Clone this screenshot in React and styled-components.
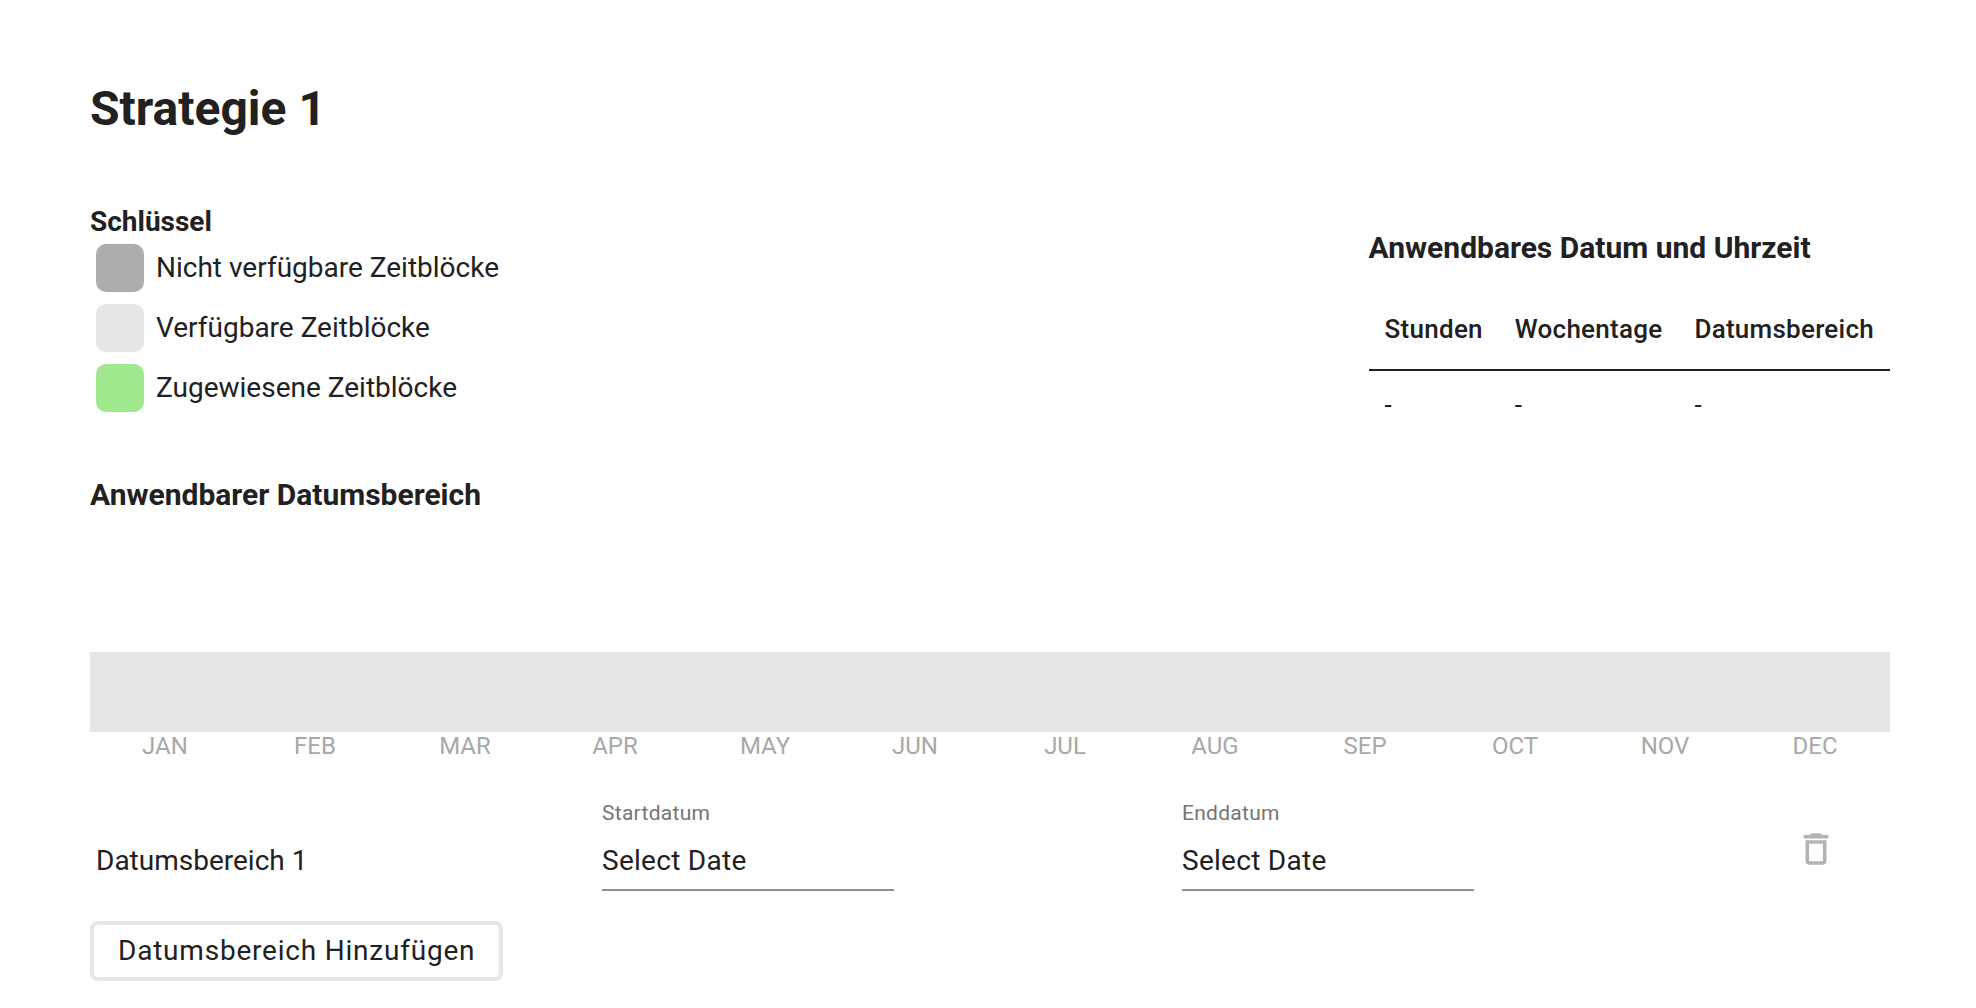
import React from "react";
import styled, { createGlobalStyle } from "styled-components";

const GlobalStyle = createGlobalStyle`
  *, *::before, *::after { box-sizing: border-box; }
  body {
    margin: 0;
    background: #fff;
    color: #212121;
    font-family: Roboto, "Liberation Sans", sans-serif;
    font-size: 28px;
    line-height: 32px;
  }
`;

const Page = styled.main`
  padding: 81px 86px 26px 90px;
`;

const Title = styled.h1`
  margin: 0;
  font-size: 48px;
  line-height: 56px;
  font-weight: 700;
`;

const Summary = styled.div`
  display: flex;
  justify-content: space-between;
  align-items: flex-start;
  margin-top: 69px;
`;

const LegendTitle = styled.h2`
  margin: 0;
  font-size: 28px;
  line-height: 32px;
  font-weight: 700;
`;

const LegendList = styled.ul`
  list-style: none;
  margin: 0;
  padding: 0;
`;

const LegendItem = styled.li`
  display: flex;
  align-items: center;
  gap: 12px;
  padding: 6px;
`;

const Swatch = styled.span`
  width: 48px;
  height: 48px;
  border-radius: 10px;
  background: ${({ $color }) => $color};
`;

const Applicable = styled.section`
  padding-top: 24px;
`;

const SectionTitle = styled.h2`
  margin: 0;
  font-size: 30px;
  line-height: 36px;
  font-weight: 700;
`;

const Table = styled.table`
  margin-top: 23px;
  border-collapse: collapse;
  font-size: 26px;
  line-height: 32px;
  text-align: left;
`;

const HeadCell = styled.th`
  padding: 24px 16px;
  font-weight: 500;
  letter-spacing: 0.01em;
  border-bottom: 2px solid #212121;
`;

const Cell = styled.td`
  padding: 18px 16px 0;
`;

const RangeSection = styled.section`
  margin-top: 56px;
`;

const YearBar = styled.div`
  height: 80px;
  margin-top: 139px;
  background: #e5e5e5;
`;

const Months = styled.ol`
  display: grid;
  grid-template-columns: repeat(12, 1fr);
  list-style: none;
  margin: 0;
  padding: 0;
  font-size: 24px;
  line-height: 28px;
  text-align: center;
  color: #a8a8a8;
`;

const RangeRow = styled.div`
  display: grid;
  grid-template-columns: 512fr 580fr 560fr 148fr;
  margin-top: 39px;
`;

const RangeName = styled.div`
  padding: 46px 6px 0;
`;

const Field = styled.div`
  display: flex;
  flex-direction: column;
  align-items: flex-start;
  letter-spacing: 0.01em;
`;

const FieldLabel = styled.label`
  font-size: 21px;
  line-height: 28px;
  color: #757575;
`;

const DateInput = styled.input`
  width: 292px;
  height: 64px;
  margin: 0;
  padding: 8px 0 4px;
  border: 0;
  border-bottom: 2px solid #8f8f8f;
  border-radius: 0;
  background: transparent;
  color: inherit;
  font: inherit;
  letter-spacing: inherit;
  outline: none;
  &::placeholder { color: #212121; opacity: 1; }
`;

const DeleteButton = styled.button`
  display: flex;
  align-self: start;
  justify-self: center;
  margin-top: 17px;
  padding: 12px;
  border: 0;
  background: transparent;
  color: #b3b3b3;
  cursor: pointer;
`;

const AddButton = styled.button`
  display: block;
  height: 60px;
  margin-top: 30px;
  padding: 0 24px;
  border: 4px solid #e6e6e6;
  border-radius: 8px;
  background: #fff;
  color: inherit;
  font: inherit;
  letter-spacing: 0.028em;
  cursor: pointer;
`;

const legend = [
  { label: "Nicht verfügbare Zeitblöcke", color: "#adadad" },
  { label: "Verfügbare Zeitblöcke", color: "#e6e6e6" },
  { label: "Zugewiesene Zeitblöcke", color: "#9fe88d" },
];

const columns = ["Stunden", "Wochentage", "Datumsbereich"];

const months = ["JAN", "FEB", "MAR", "APR", "MAY", "JUN", "JUL", "AUG", "SEP", "OCT", "NOV", "DEC"];

function TrashIcon() {
  return (
    <svg width="42" height="42" viewBox="0 0 24 24" fill="currentColor" aria-hidden="true">
      <path d="M6 19c0 1.1.9 2 2 2h8c1.1 0 2-.9 2-2V7H6v12zM8 9h8v10H8V9zM15.5 4l-.71-.71A1 1 0 0 0 14.09 3H9.91a1 1 0 0 0-.7.29L8.5 4H5v2h14V4z" />
    </svg>
  );
}

function DateField({ id, label }) {
  return (
    <Field>
      <FieldLabel htmlFor={id}>{label}</FieldLabel>
      <DateInput id={id} type="text" placeholder="Select Date" />
    </Field>
  );
}

export default function App() {
  return (
    <>
      <GlobalStyle />
      <Page>
        <Title>Strategie 1</Title>
        <Summary>
          <section>
            <LegendTitle>Schlüssel</LegendTitle>
            <LegendList>
              {legend.map(({ label, color }) => (
                <LegendItem key={label}>
                  <Swatch $color={color} />
                  {label}
                </LegendItem>
              ))}
            </LegendList>
          </section>
          <Applicable>
            <SectionTitle>Anwendbares Datum und Uhrzeit</SectionTitle>
            <Table>
              <thead>
                <tr>
                  {columns.map((name) => (
                    <HeadCell key={name} scope="col">{name}</HeadCell>
                  ))}
                </tr>
              </thead>
              <tbody>
                <tr>
                  {columns.map((name) => (
                    <Cell key={name}>-</Cell>
                  ))}
                </tr>
              </tbody>
            </Table>
          </Applicable>
        </Summary>
        <RangeSection>
          <SectionTitle>Anwendbarer Datumsbereich</SectionTitle>
          <YearBar />
          <Months>
            {months.map((month) => (
              <li key={month}>{month}</li>
            ))}
          </Months>
          <RangeRow>
            <RangeName>Datumsbereich 1</RangeName>
            <DateField id="start-date" label="Startdatum" />
            <DateField id="end-date" label="Enddatum" />
            <DeleteButton type="button" aria-label="Datumsbereich 1 löschen">
              <TrashIcon />
            </DeleteButton>
          </RangeRow>
          <AddButton type="button">Datumsbereich Hinzufügen</AddButton>
        </RangeSection>
      </Page>
    </>
  );
}
